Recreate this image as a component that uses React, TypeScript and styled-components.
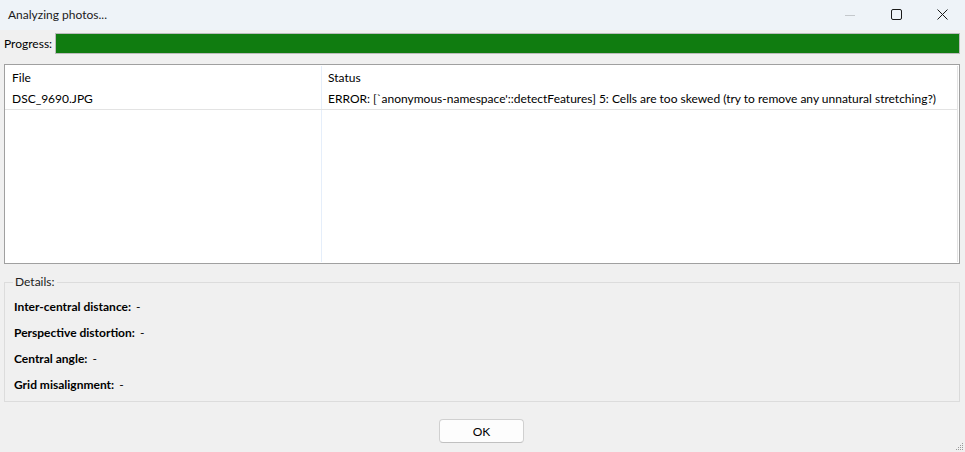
import styled, { createGlobalStyle } from "styled-components";

const GlobalStyle = createGlobalStyle`
  html, body {
    margin: 0;
    padding: 0;
    background: #f0f0f0;
  }
  body {
    font-family: "Segoe UI", Lato, "Noto Sans", sans-serif;
    font-size: 12px;
    color: #000;
  }
`;

const DETAILS = [
  { label: "Inter-central distance:", value: "-" },
  { label: "Perspective distortion:", value: "-" },
  { label: "Central angle:", value: "-" },
  { label: "Grid misalignment:", value: "-" },
];

const ROWS = [
  {
    file: "DSC_9690.JPG",
    status:
      "ERROR: [`anonymous-namespace'::detectFeatures] 5: Cells are too skewed (try to remove any unnatural stretching?)",
  },
];

const App = () => {
  return (
    <>
      <GlobalStyle />
      <Window>
        <TitleBar>
          <Title>Analyzing photos...</Title>
          <Controls>
            <ControlButton>
              <svg width="10" height="10" viewBox="0 0 10 10">
                <path d="M0 5.5h10" stroke="#c4c8cc" strokeWidth="1" />
              </svg>
            </ControlButton>
            <ControlButton>
              <svg width="11" height="11" viewBox="0 0 11 11">
                <rect x="0.5" y="0.5" width="10" height="10" rx="1.5" fill="none" stroke="#1a1a1a" strokeWidth="1" />
              </svg>
            </ControlButton>
            <ControlButton>
              <svg width="11" height="11" viewBox="0 0 11 11">
                <path d="M0.5 0.5l10 10M10.5 0.5l-10 10" stroke="#1a1a1a" strokeWidth="1" />
              </svg>
            </ControlButton>
          </Controls>
        </TitleBar>

        <Body>
          <ProgressRow>
            <span>Progress:</span>
            <ProgressTrack>
              <ProgressFill style={{ width: "100%" }} />
            </ProgressTrack>
          </ProgressRow>

          <TableFrame>
            <Table>
              <HeaderRow>
                <Cell $first>File</Cell>
                <Cell>Status</Cell>
              </HeaderRow>
              {ROWS.map((r) => (
                <DataRow key={r.file}>
                  <Cell $first>{r.file}</Cell>
                  <Cell>{r.status}</Cell>
                </DataRow>
              ))}
              <FillerRow>
                <Cell $first />
                <Cell />
              </FillerRow>
            </Table>
          </TableFrame>

          <GroupBox>
            <Legend>Details:</Legend>
            {DETAILS.map((d) => (
              <DetailRow key={d.label}>
                <DetailLabel>{d.label}</DetailLabel>
                <span>{d.value}</span>
              </DetailRow>
            ))}
          </GroupBox>

          <Footer>
            <OkButton>OK</OkButton>
          </Footer>
        </Body>
        <Grip>
          <svg width="10" height="10" viewBox="0 0 10 10">
            {[
              [8, 2],
              [6, 4],
              [8, 4],
              [4, 6],
              [6, 6],
              [8, 6],
              [2, 8],
              [4, 8],
              [6, 8],
              [8, 8],
            ].map(([x, y]) => (
              <rect key={`${x}-${y}`} x={x} y={y} width="1" height="1" fill="#9a9a9a" />
            ))}
          </svg>
        </Grip>
      </Window>
    </>
  );
};

export default App;

const Window = styled.div`
  position: relative;
  width: 965px;
  height: 452px;
  display: flex;
  flex-direction: column;
  background: #f0f0f0;
  overflow: hidden;
`;

const TitleBar = styled.div`
  height: 30px;
  flex-shrink: 0;
  display: flex;
  align-items: center;
  justify-content: space-between;
  background: #eef3f8;
  padding-left: 8px;
`;

const Title = styled.div`
  font-size: 12px;
  color: #1a1a1a;
  margin-top: -2px;
`;

const Controls = styled.div`
  display: flex;
  height: 100%;
  align-self: flex-start;
`;

const ControlButton = styled.div`
  width: 46px;
  height: 29px;
  display: flex;
  align-items: center;
  justify-content: center;

  & > svg {
    display: block;
  }
`;

const Body = styled.div`
  flex: 1;
  display: flex;
  flex-direction: column;
  padding: 3px 5px 0 4px;
`;

const ProgressRow = styled.div`
  display: flex;
  align-items: center;
  gap: 3px;
  height: 21px;
`;

const ProgressTrack = styled.div`
  flex: 1;
  height: 21px;
  box-sizing: border-box;
  border: 1px solid #bcbcbc;
  background: #e6e6e6;
`;

const ProgressFill = styled.div`
  height: 100%;
  background: #107c10;
`;

const TableFrame = styled.div`
  margin-top: 10px;
  height: 200px;
  box-sizing: border-box;
  border: 1px solid #a0a0a0;
  background: #fff;
  padding: 1px 1px 1px 0;
  display: flex;
`;

const Table = styled.div`
  flex: 1;
  display: flex;
  flex-direction: column;
  border-right: 1px solid #e3e3e3;
`;

const HeaderRow = styled.div`
  display: grid;
  grid-template-columns: 317px 1fr;
  height: 22px;
  align-items: center;
`;

const DataRow = styled.div`
  display: grid;
  grid-template-columns: 317px 1fr;
  height: 21px;
  align-items: center;
  border-bottom: 1px solid #e3e3e3;
`;

const FillerRow = styled.div`
  flex: 1;
  display: grid;
  grid-template-columns: 317px 1fr;
`;

const Cell = styled.div<{ $first?: boolean }>`
  height: 100%;
  display: flex;
  align-items: center;
  padding-left: ${({ $first }) => ($first ? "7px" : "6px")};
  border-right: ${({ $first }) => ($first ? "1px solid #e5eefa" : "none")};
  white-space: nowrap;
  overflow: hidden;
  color: #000;
`;

const GroupBox = styled.div`
  margin-top: 18px;
  height: 120px;
  box-sizing: border-box;
  border: 1px solid #dcdcdc;
  padding: 15px 9px 0 9px;
  position: relative;
  display: flex;
  flex-direction: column;
  gap: 10px;
`;

const Legend = styled.div`
  position: absolute;
  top: -9px;
  left: 8px;
  padding: 0 2px;
  background: #f0f0f0;
  color: #222;
`;

const DetailRow = styled.div`
  display: flex;
  gap: 5px;
  height: 16px;
  align-items: center;
`;

const DetailLabel = styled.span`
  font-weight: 700;
`;

const Footer = styled.div`
  display: flex;
  justify-content: center;
  padding-top: 17px;
  padding-right: 1px;
`;

const OkButton = styled.button`
  width: 85px;
  height: 24px;
  box-sizing: border-box;
  background: #fdfdfd;
  border: 1px solid #d0d0d0;
  border-bottom-color: #c0c0c0;
  border-radius: 4px;
  font-family: inherit;
  font-size: 12px;
  color: #000;
  padding: 0;
`;

const Grip = styled.div`
  position: absolute;
  right: 1px;
  bottom: 1px;
  line-height: 0;
`;
